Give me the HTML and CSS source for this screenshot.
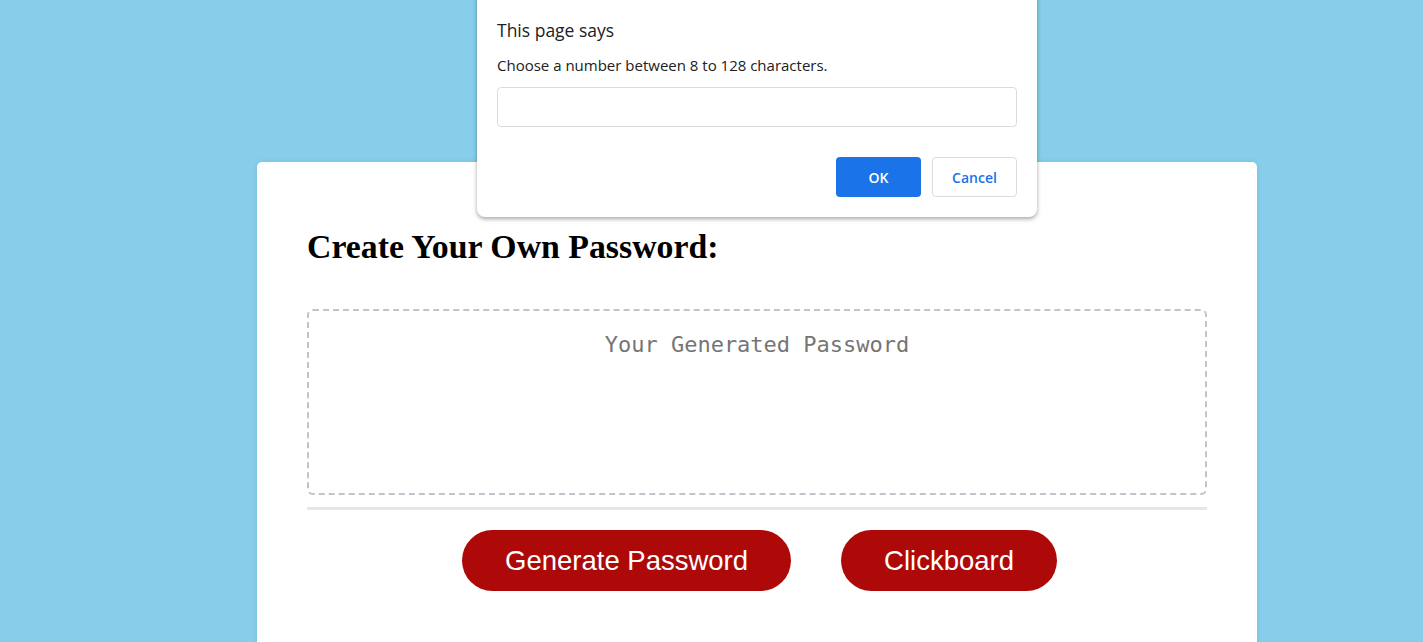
FILE: index.html
```html
<!DOCTYPE html>
<html>
<head>
<meta charset="utf-8">
<link rel="stylesheet" href="styles.css">
<title>Password Generator</title>
</head>
<body>
<div class="wrapper">
  <div class="card">
    <h2 class="card-title">Create Your Own Password:</h2>
    <div class="card-body">
      <textarea class="password" readonly placeholder="Your Generated Password"></textarea>
    </div>
    <div class="card-footer">
      <button class="btn">Generate Password</button>
      <button class="btn">Clickboard</button>
    </div>
  </div>
</div>

<div class="dialog">
  <div class="dialog-title">This page says</div>
  <div class="dialog-msg">Choose a number between 8 to 128 characters.</div>
  <div class="dialog-input"></div>
  <div class="dialog-actions">
    <button class="dbtn ok">OK</button>
    <button class="dbtn cancel">Cancel</button>
  </div>
</div>
</body>
</html>
```
FILE: styles.css
```css
html, body {
  margin: 0;
  padding: 0;
  height: 100%;
  overflow: hidden;
}
body {
  background: #87ceeb;
  font-family: "Liberation Serif", serif;
}
.wrapper {
  padding-top: 162px;
  padding-left: 257px;
  display: flex;
}
.card {
  width: 1000px;
  background: #fff;
  border-radius: 5px;
  padding: 0 50px 80px;
  box-sizing: border-box;
  box-shadow: 0 0 6px rgba(0,0,0,0.08);
}
.card-title {
  margin: 0;
  padding-top: 66px;
  font-size: 33.8px;
  font-weight: bold;
  line-height: 37px;
  color: #000;
}
.card-body {
  padding-top: 44px;
  padding-bottom: 12px;
  border-bottom: 3px solid #e6e6e6;
}
.password {
  display: block;
  width: 100%;
  height: 186px;
  box-sizing: border-box;
  border: 2px dashed #c0c4cc;
  border-radius: 6px;
  resize: none;
  padding: 21px 20px;
  font-family: "DejaVu Sans Mono", "Liberation Mono", monospace;
  font-size: 22px;
  text-align: center;
  outline: none;
}
.password::placeholder {
  color: #757575;
}
.card-footer {
  display: flex;
  justify-content: center;
  gap: 50px;
  padding-top: 20px;
  padding-left: 5px;
}
.btn {
  height: 61px;
  padding: 0 43px;
  border: none;
  border-radius: 31px;
  background: #ad0909;
  color: #fff;
  font-family: "Liberation Sans", Arial, sans-serif;
  font-size: 27.5px;
}
.dialog {
  position: absolute;
  left: 477px;
  top: -10px;
  width: 560px;
  box-sizing: border-box;
  background: #fff;
  border-radius: 8px;
  box-shadow: 0 2px 4px rgba(0,0,0,0.35);
  padding: 27px 20px 20px;
  font-family: "Open Sans", "Noto Sans", sans-serif;
  color: #202124;
}
.dialog-title {
  font-size: 17.5px;
  line-height: 26px;
}
.dialog-msg {
  font-size: 15px;
  line-height: 20px;
  margin-top: 12px;
}
.dialog-input {
  margin-top: 12px;
  height: 40px;
  box-sizing: border-box;
  border: 1px solid #dadce0;
  border-radius: 4px;
}
.dialog-actions {
  display: flex;
  justify-content: flex-end;
  gap: 11px;
  margin-top: 30px;
}
.dbtn {
  width: 85px;
  height: 40px;
  border-radius: 4px;
  font-family: "Open Sans", "Noto Sans", sans-serif;
  font-size: 14px;
  font-weight: 600;
}
.ok {
  background: #1a73e8;
  color: #fff;
  border: none;
}
.cancel {
  background: #fff;
  color: #1a73e8;
  border: 1px solid #dadce0;
}
```
